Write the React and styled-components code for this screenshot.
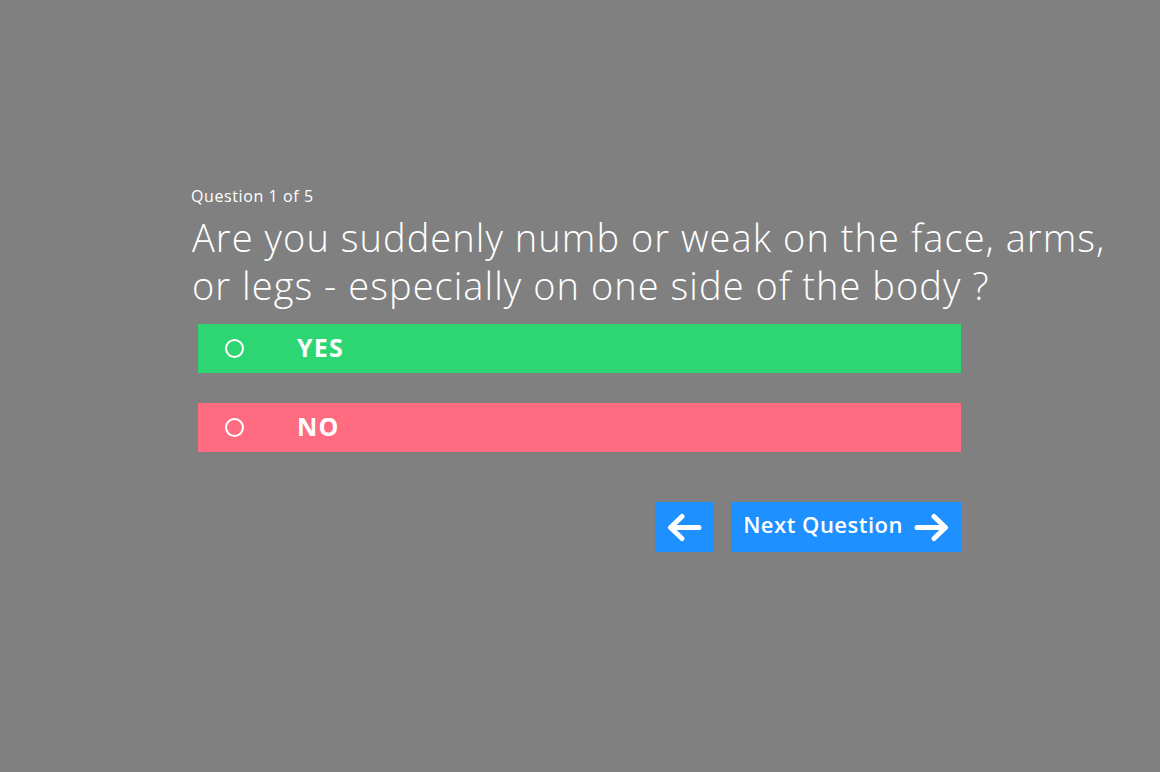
import React from 'react';
import styled, { createGlobalStyle } from 'styled-components';

const GlobalStyle = createGlobalStyle`
  html, body {
    margin: 0;
    padding: 0;
    background: #808080;
    font-family: 'Open Sans', 'Noto Sans', sans-serif;
    color: #ffffff;
  }
`;

const Page = styled.main`
  width: 100%;
  min-height: 772px;
  box-sizing: border-box;
  padding: 185px 0 0 191px;
`;

const Counter = styled.p`
  margin: 0;
  font-size: 16px;
  line-height: 22px;
  font-weight: 400;
  letter-spacing: 0.6px;
`;

const QuestionText = styled.h1`
  margin: 6px 0 15px 1px;
  width: 930px;
  font-size: 38px;
  line-height: 48px;
  font-weight: 300;
  letter-spacing: 1.05px;
`;

const Answers = styled.div`
  display: flex;
  flex-direction: column;
  gap: 30px;
  width: 763px;
  margin-left: 7px;
`;

const Answer = styled.button`
  display: flex;
  align-items: center;
  height: 49px;
  border: none;
  padding: 0 0 0 27px;
  background: ${(p) => p.color};
  color: #ffffff;
  font-family: inherit;
  font-size: 25px;
  font-weight: 700;
  letter-spacing: 1.2px;
  cursor: pointer;
  text-align: left;
`;

const AnswerLabel = styled.span`
  padding-bottom: 4px;
`;

const Radio = styled.span`
  width: 15px;
  height: 15px;
  border: 2px solid #ffffff;
  border-radius: 50%;
  margin-right: 53px;
  flex-shrink: 0;
`;

const Nav = styled.div`
  display: flex;
  justify-content: flex-end;
  gap: 17px;
  width: 770px;
  margin-top: 50px;
`;

const NavButton = styled.button`
  display: flex;
  align-items: center;
  justify-content: center;
  gap: 11px;
  height: 50px;
  border: none;
  background: #1e90ff;
  color: #ffffff;
  font-family: inherit;
  font-size: 22px;
  font-weight: 600;
  letter-spacing: 0.5px;
  padding: 0 12px;
  min-width: 58px;
  cursor: pointer;
`;

const NavLabel = styled.span`
  padding-bottom: 6px;
`;

const Arrow = ({ dir }) => (
  <svg width="35" height="29" viewBox="0 0 35 29" fill="none"
    stroke="#ffffff" strokeWidth="5" strokeLinecap="round" strokeLinejoin="round"
    style={dir === 'left' ? { transform: 'scaleX(-1)' } : undefined}>
    <path d="M3 14.5h28M20 3.5l11.5 11-11.5 11" />
  </svg>
);

export default function App() {
  return (
    <>
      <GlobalStyle />
      <Page>
        <Counter>Question 1 of 5</Counter>
        <QuestionText>
          Are you suddenly numb or weak on the face, arms, or legs - especially on one side of the body ?
        </QuestionText>
        <Answers>
          <Answer color="#2ed573"><Radio /><AnswerLabel>YES</AnswerLabel></Answer>
          <Answer color="#ff6b81"><Radio /><AnswerLabel>NO</AnswerLabel></Answer>
        </Answers>
        <Nav>
          <NavButton aria-label="Previous question"><Arrow dir="left" /></NavButton>
          <NavButton><NavLabel>Next Question</NavLabel><Arrow /></NavButton>
        </Nav>
      </Page>
    </>
  );
}
